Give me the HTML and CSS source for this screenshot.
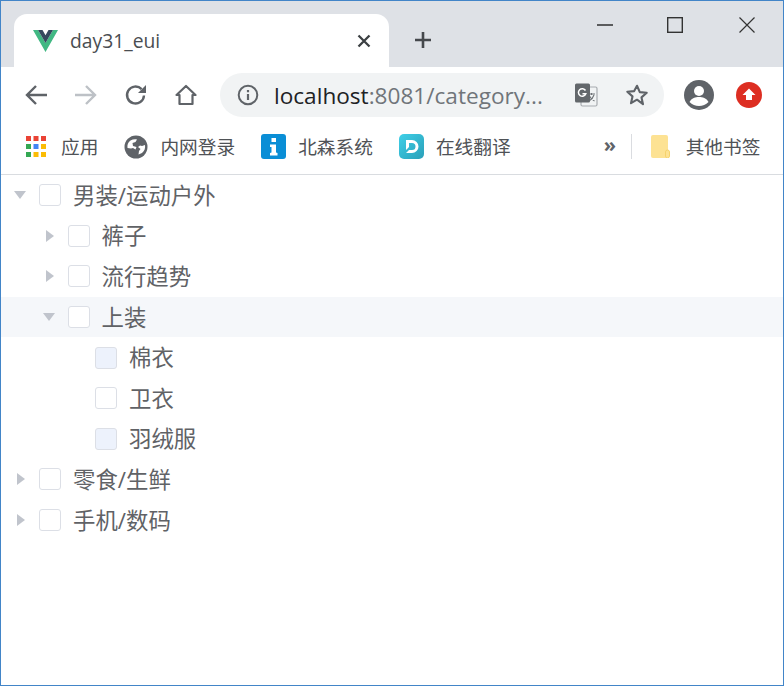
FILE: index.html
```html
<!DOCTYPE html>
<html lang="zh-CN">
<head>
<meta charset="utf-8">
<title>day31_eui</title>
<link rel="stylesheet" href="styles.css">
</head>
<body>
<div class="window">
  <header class="tabstrip">
    <div class="tab">
      <svg class="favicon" width="25" height="22" viewBox="0 0 25 22"><path d="M0 0h5L12.500 13 20 0h5L12.500 22z" fill="#41b883"/><path d="M5 0h4.500L12.500 5.200 15.500 0H20L12.500 13z" fill="#35495e"/></svg>
      <span class="tab-title">day31_eui</span>
      <svg class="tab-close" width="14" height="14" viewBox="0 0 14 14"><path d="M1.500 1.500l11 11M12.500 1.500l-11 11" stroke="#3c4043" stroke-width="2.300"/></svg>
    </div>
    <svg class="newtab" width="16" height="16" viewBox="0 0 16 16"><path d="M8 0v16M0 8h16" stroke="#45484c" stroke-width="2.600"/></svg>
    <div class="winctl">
      <span class="winbtn win-min"><svg width="16" height="16" viewBox="0 0 16 16"><path d="M0 8h16" stroke="#222" stroke-width="1.400"/></svg></span>
      <span class="winbtn"><svg width="16" height="16" viewBox="0 0 16 16"><rect x="0.700" y="0.700" width="14.600" height="14.600" fill="none" stroke="#333" stroke-width="1.400"/></svg></span>
      <span class="winbtn"><svg width="16" height="16" viewBox="0 0 16 16"><path d="M0.500 0.500l15 15M15.500 0.500l-15 15" stroke="#333" stroke-width="1.200"/></svg></span>
    </div>
  </header>

  <nav class="toolbar">
    <span class="tool"><svg width="22" height="22" viewBox="0 0 22 22"><path d="M22 11H2M11 2l-9 9 9 9" fill="none" stroke="#5f6368" stroke-width="2.400"/></svg></span>
    <span class="tool"><svg width="22" height="22" viewBox="0 0 22 22"><path d="M0 11h20M11 2l9 9-9 9" fill="none" stroke="#bdc1c6" stroke-width="2.400"/></svg></span>
    <span class="tool"><svg width="24" height="24" viewBox="0 0 24 24"><path d="M20 12.500a8.500 8.500 0 1 1-2.400-6.400" fill="none" stroke="#5f6368" stroke-width="2.400"/><path d="M22 2v8h-8z" fill="#5f6368"/></svg></span>
    <span class="tool"><svg width="22" height="22" viewBox="0 0 22 22"><path d="M1.500 11L11 2l9.500 9H17.500v9h-13v-9z" fill="none" stroke="#5f6368" stroke-width="2.200" stroke-linejoin="round"/></svg></span>
    <div class="omnibox">
      <svg class="info" width="22" height="22" viewBox="0 0 22 22"><circle cx="11" cy="11" r="9.300" fill="none" stroke="#5f6368" stroke-width="2"/><path d="M11 10v6M11 6v2.200" stroke="#5f6368" stroke-width="2.200"/></svg>
      <span class="url"><span class="url-host">localhost</span>:8081/category...</span>
      <svg class="translate" width="24" height="24" viewBox="0 0 24 24"><rect x="7" y="4" width="16" height="19" rx="1.500" fill="#f1f3f4" stroke="#a8acb0" stroke-width="1.200"/><path d="M14 11h7M17.500 10v2M20 12c-1 3-3 5-5 6M15.500 13c1 2 3 4 5 5" fill="none" stroke="#6f7377" stroke-width="1.100"/><rect x="1" y="0.500" width="15" height="19" rx="1.500" fill="#63676b"/><path d="M11.500 7.500a3.800 3.800 0 1 0 .3 3.300H8.500" fill="none" stroke="#fff" stroke-width="1.500"/></svg>
      <svg class="star" width="24" height="24" viewBox="0 0 24 24"><path d="M12 2.800l2.800 6.300 6.900.7-5.200 4.600 1.500 6.800L12 16.700l-6 3.500 1.500-6.800-5.200-4.600 6.900-.7z" fill="none" stroke="#5f6368" stroke-width="2.100" stroke-linejoin="round"/></svg>
    </div>
    <svg class="profile" width="30" height="30" viewBox="0 0 30 30"><circle cx="15" cy="15" r="15" fill="#5f6368"/><circle cx="15" cy="11" r="5" fill="#fff"/><path d="M5.500 22c2-4 6-5 9.500-5s7.500 1 9.500 5c-2.500 2.500-6 4-9.500 4s-7-1.500-9.500-4z" fill="#fff"/></svg>
    <svg class="ext" width="26" height="26" viewBox="0 0 26 26"><circle cx="13" cy="13" r="13" fill="#dd2e22"/><path d="M13 6.500l6.500 6.500h-3.500v5h-6v-5H6.500z" fill="#fff"/></svg>
  </nav>

  <nav class="bookmarks">
    <a class="bm bm-apps">
      <svg class="bm-icon" width="20" height="22" viewBox="0 0 20 22">
        <rect x="0" y="0" width="5" height="5" fill="#ea4335"/><rect x="7.500" y="0" width="5" height="5" fill="#ea4335"/><rect x="15" y="0" width="5" height="5" fill="#ea4335"/>
        <rect x="0" y="8" width="5" height="5" fill="#34a853"/><rect x="7.500" y="8" width="5" height="5" fill="#4285f4"/><rect x="15" y="8" width="5" height="5" fill="#fbbc05"/>
        <rect x="0" y="16" width="5" height="5" fill="#34a853"/><rect x="7.500" y="16" width="5" height="5" fill="#fbbc05"/><rect x="15" y="16" width="5" height="5" fill="#fbbc05"/>
      </svg>
      <span>应用</span>
    </a>
    <a class="bm bm-net">
      <svg class="bm-icon" width="24" height="24" viewBox="0 0 24 24"><circle cx="12" cy="12" r="11.500" fill="#5f6368"/><path d="M3.500 13c-.5-3 .5-6 3-7.500 2-1.200 4.500-1.500 6.500-1l-1.500 2.500-3 1 .5 3 3.500 1-1 2.500-2.500-1.500-2 .5zM21 10c.5 3-.5 6-3 8l-3.500 1.500.5-3.500 1.500-2-2.500-2 2-1.500 2 .5z" fill="#fff"/></svg>
      <span>内网登录</span>
    </a>
    <a class="bm bm-sys">
      <svg class="bm-icon" width="25" height="25" viewBox="0 0 25 25"><rect width="25" height="25" rx="3" fill="#0a8ed6"/><rect x="10.500" y="4" width="4.500" height="4" fill="#fff"/><path d="M9 10.500h6v8l1.500.5v2.500H9V19l1.500-.5v-5.500L9 13z" fill="#fff"/></svg>
      <span>北森系统</span>
    </a>
    <a class="bm bm-trans">
      <svg class="bm-icon" width="25" height="25" viewBox="0 0 25 25"><defs><linearGradient id="dgrad" x1="0" y1="0" x2="1" y2="1"><stop offset="0" stop-color="#3fd0e8"/><stop offset="1" stop-color="#2a9fb8"/></linearGradient></defs><rect width="25" height="25" rx="5" fill="url(#dgrad)"/><path d="M7 6h6a6.500 6.500 0 0 1 0 13H7l3-3h3a3.500 3.500 0 0 0 0-7h-3v4l-3 3z" fill="#fff"/></svg>
      <span>在线翻译</span>
    </a>
    <span class="bm-more">»</span>
    <span class="bm-sep"></span>
    <a class="bm bm-other">
      <svg class="bm-icon" width="19" height="23" viewBox="0 0 19 23"><path d="M2 0h13a2 2 0 0 1 2 2v19a2 2 0 0 1-2 2H2a2 2 0 0 1-2-2V2a2 2 0 0 1 2-2z" fill="#fde293"/><rect x="14.500" y="15" width="4" height="8" rx="2" fill="#fde293" stroke="#f6d26d"/></svg>
      <span>其他书签</span>
    </a>
  </nav>

  <main class="tree">
    <div class="node lv1"><span class="caret down"></span><span class="check"></span><span class="label">男装/运动户外</span></div>
    <div class="node lv2"><span class="caret"></span><span class="check"></span><span class="label">裤子</span></div>
    <div class="node lv2"><span class="caret"></span><span class="check"></span><span class="label">流行趋势</span></div>
    <div class="node lv2 hover"><span class="caret down"></span><span class="check"></span><span class="label">上装</span></div>
    <div class="node lv3"><span class="caret none"></span><span class="check disabled"></span><span class="label">棉衣</span></div>
    <div class="node lv3"><span class="caret none"></span><span class="check"></span><span class="label">卫衣</span></div>
    <div class="node lv3"><span class="caret none"></span><span class="check disabled"></span><span class="label">羽绒服</span></div>
    <div class="node lv1"><span class="caret"></span><span class="check"></span><span class="label">零食/生鲜</span></div>
    <div class="node lv1"><span class="caret"></span><span class="check"></span><span class="label">手机/数码</span></div>
  </main>
</div>
</body>
</html>
```
FILE: styles.css
```css
* { box-sizing: border-box; }
html, body { margin: 0; padding: 0; background: #fff; }
body {
  font-family: "Open Sans", "Noto Sans CJK SC", sans-serif;
}
.window {
  width: 784px;
  height: 686px;
  border: 1px solid #4285c8;
  display: flex;
  flex-direction: column;
  overflow: hidden;
}

/* tab strip */
.tabstrip {
  height: 66px;
  flex: none;
  background: #dee1e6;
  display: flex;
  align-items: flex-end;
  padding-left: 13px;
}
.tab {
  width: 375px;
  height: 53px;
  background: #fff;
  border-radius: 13px 13px 0 0;
  display: flex;
  align-items: center;
  padding: 0 18px 0 19px;
}
.favicon { flex: none; }
.tab-title {
  margin-left: 12px;
  font-size: 19.300px;
  color: #4a4d51;
  flex: 1;
}
.tab-close { flex: none; }
.newtab { flex: none; margin: 0 0 19px 26px; }
.winctl {
  margin-left: auto;
  align-self: flex-start;
  display: flex;
  padding-top: 16px;
}
.winbtn {
  width: 72px;
  height: 16px;
  display: flex;
  justify-content: center;
}
.win-min { padding-left: 4px; }

/* toolbar */
.toolbar {
  height: 60px;
  flex: none;
  display: flex;
  align-items: center;
  padding: 0 0 4px 10px;
}
.tool {
  width: 50px;
  display: flex;
  justify-content: center;
}
.omnibox {
  width: 444px;
  height: 44px;
  margin-left: 9px;
  border-radius: 22px;
  background: #f1f3f4;
  display: flex;
  align-items: center;
  padding-left: 17px;
}
.info { flex: none; }
.url {
  margin-left: 15px;
  width: 300px;
  flex: none;
  font-size: 22.600px;
  color: #70757a;
  white-space: nowrap;
}
.url-host { color: #202124; }
.translate { flex: none; }
.star { flex: none; margin-left: 27px; }
.profile { flex: none; margin-left: 20px; }
.ext { flex: none; margin-left: 22px; }

/* bookmarks */
.bookmarks {
  height: 48px;
  flex: none;
  display: flex;
  align-items: center;
  border-bottom: 1px solid #d9dce0;
  padding: 0 0 8px 25px;
  font-size: 18.700px;
  color: #4f5256;
}
.bm { display: flex; align-items: center; white-space: nowrap; }
.bm span { padding-bottom: 3px; }
.bm-icon { flex: none; }
.bm-apps span { margin-left: 15px; }
.bm-net { margin-left: 26px; }
.bm-net span { margin-left: 12px; }
.bm-sys { margin-left: 26px; }
.bm-sys span { margin-left: 12px; }
.bm-trans { margin-left: 26px; }
.bm-trans span { margin-left: 12px; }
.bm-more {
  margin-left: 93px;
  width: 12px;
  font-size: 20px;
  line-height: 20px;
  font-weight: 700;
  color: #5f6368;
  margin-top: -4px;
}
.bm-sep { width: 1px; height: 25px; margin-left: 15px; background: #dadce0; }
.bm-other { margin-left: 19px; }
.bm-other span { margin-left: 16px; }

/* tree */
.tree {
  display: flex;
  flex-direction: column;
}
.node {
  height: 40.600px;
  flex: none;
  display: flex;
  align-items: center;
  font-size: 22.400px;
  color: #606266;
}
.node.hover { background: #f5f7fa; }
.lv1 { padding-left: 0; }
.lv2 { padding-left: 28.500px; }
.lv3 { padding-left: 56px; }
.caret {
  width: 38px;
  flex: none;
  display: flex;
  justify-content: center;
  height: 12px;
  align-items: center;
}
.caret::before {
  content: "";
  width: 0;
  height: 0;
  border-left: 8px solid #c0c4cc;
  border-top: 6px solid transparent;
  border-bottom: 6px solid transparent;
  margin-left: 2px;
}
.caret.down::before {
  border-top: 8px solid #c0c4cc;
  border-left: 6px solid transparent;
  border-right: 6px solid transparent;
  border-bottom: 0;
  margin-left: 0;
}
.caret.none::before { display: none; }
.check {
  width: 22px;
  height: 22px;
  flex: none;
  border: 1px solid #dcdfe6;
  border-radius: 3px;
  background: #fff;
}
.check.disabled { background: #edf2fc; }
.label { margin-left: 12px; padding-bottom: 2px; white-space: nowrap; }
```
